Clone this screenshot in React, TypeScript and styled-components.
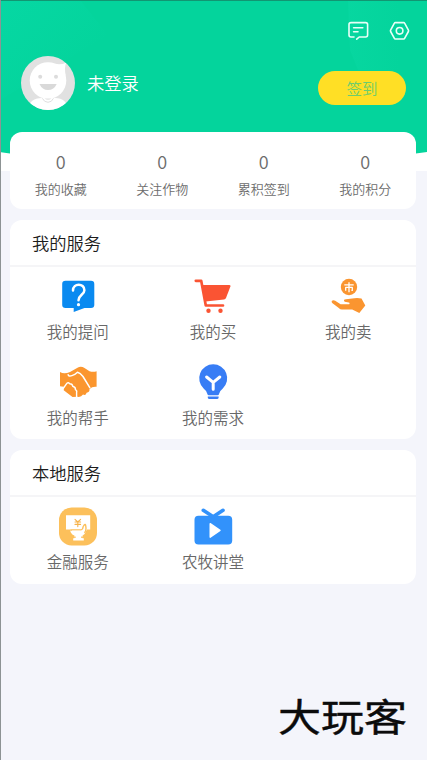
import React from 'react';
import styled, { createGlobalStyle } from 'styled-components';

const Global = createGlobalStyle`
  * { box-sizing: border-box; }
  body { margin: 0; background: #f4f5fb; font-family: "Noto Sans CJK SC", "Noto Sans", sans-serif; font-weight: 350; }
`;

const Screen = styled.main`
  position: relative;
  width: 427px;
  height: 760px;
  overflow: hidden;
  background: #f4f5fb;
  border-left: 1px solid #8d9394;
`;

const Backdrop = styled.svg`
  position: absolute;
  top: 0;
  left: -1px;
  display: block;
`;

const Header = styled.header`
  position: relative;
  height: 132px;
  padding: 20px 21px 0 20px;
`;

const Toolbar = styled.div`
  display: flex;
  justify-content: flex-end;
  gap: 20px;
  height: 22px;
  margin-right: -4px;
`;

const Profile = styled.div`
  display: flex;
  align-items: center;
  height: 55px;
  margin-top: 13px;
`;

const Name = styled.span`
  flex: 1;
  margin-left: 12px;
  color: #fff;
  font-size: 17.3px;
  line-height: 24px;
`;

const CheckIn = styled.button`
  width: 88px;
  height: 34px;
  margin-top: 11px;
  padding: 0;
  border: 0;
  border-radius: 17px;
  background: #ffdf25;
  color: #6ccd6c;
  font: 350 15.5px/34px "Noto Sans CJK SC", sans-serif;
`;

const Card = styled.section<{ $height: number }>`
  position: relative;
  width: 406px;
  height: ${(p) => p.$height}px;
  margin: 0 0 11.5px 9px;
  border-radius: 12px;
  background: #fff;
`;

const Stats = styled.div`
  display: grid;
  grid-template-columns: repeat(4, 1fr);
  padding-top: 18px;
  text-align: center;
  color: #6c6c6c;
`;

const StatValue = styled.div`
  font-size: 18px;
  line-height: 22px;
`;

const StatLabel = styled.div`
  margin-top: 7px;
  font-size: 13px;
  line-height: 20px;
`;

const CardTitle = styled.h2`
  height: 46.5px;
  margin: 0;
  padding-left: 22px;
  border-bottom: 2px solid #f5f5f7;
  color: #1c1c1c;
  font-size: 17.3px;
  font-weight: 350;
  line-height: 46px;
`;

const Services = styled.div`
  display: grid;
  grid-template-columns: repeat(3, 1fr);
  grid-auto-rows: 86px;
  padding-top: 9.5px;
`;

const ServiceItem = styled.div`
  display: flex;
  flex-direction: column;
  align-items: center;
  color: #686868;
  font-size: 15.5px;
  line-height: 24px;

  svg { display: block; margin-bottom: 3px; }
`;

const Brand = styled.div`
  position: absolute;
  left: 277px;
  top: 686px;
  color: #0b0b0b;
  font-size: 43px;
  font-weight: 400;
  line-height: 56px;
  white-space: nowrap;
  transform: scaleY(0.88);
  -webkit-text-stroke: 0.5px #0b0b0b;
  stroke-linejoin: round;
`;

const Icon = ({ children }: { children: React.ReactNode }) => (
  <svg width="40" height="40" viewBox="0 0 40 40" fill="none" strokeLinecap="round" strokeLinejoin="round">
    {children}
  </svg>
);

const QuestionIcon = () => (
  <Icon>
    <path d="M7.5 4.8H33Q36.3 4.8 36.3 8V29Q36.3 32 33 32H26.5L15.7 36V32H7.5Q4.2 32 4.2 29V8Q4.2 4.8 7.5 4.8Z" fill="#0a8af0" />
    <path d="M15 14.5C15 6.8 26.4 6.8 26.4 14.2C26.4 18.7 20.5 19 20.5 24.3" stroke="#fff" strokeWidth="2.5" />
    <circle cx="20.5" cy="28.7" r="1.6" fill="#fff" />
  </Icon>
);

const CartIcon = () => (
  <Icon>
    <path d="M2.8 4.8H8.2L12.8 29.5H30" stroke="#fa5433" strokeWidth="2.7" />
    <path d="M9.5 9H36.4Q38 9 37.4 10.6L33 22Q32.4 23.3 31 23.5L12.5 25.5Z" fill="#fa5433" />
    <circle cx="15.5" cy="34.7" r="2.2" fill="#fa5433" />
    <circle cx="27.5" cy="34.7" r="2.2" fill="#fa5433" />
  </Icon>
);

const SellIcon = () => (
  <Icon>
    <circle cx="21" cy="11" r="8.2" fill="#fa9530" />
    <path d="M21 6.3V8.2M16.3 8.8H25.7M17.7 14.7V11.4H24.3V14.4H23.4M21 9V16.3" stroke="#fff" strokeWidth="1.3" strokeLinecap="butt" />
    <path d="M3.9 24.8Q5.4 23.5 7.2 24.8L12.6 28.2H21.2Q22.4 26.9 20.8 26.5L16.7 25.8Q14.7 23.6 18 23.2L26.4 22.2Q30 21.6 33.5 22.6L37.3 29.6L31.3 37L24.2 33.6H14Q12.2 33.6 10.8 32L4.5 27.2Q3 26 3.9 24.8Z" fill="#fa9530" />
  </Icon>
);

const HandshakeIcon = () => (
  <Icon>
    <path d="M2 10Q6 12.4 12 10L19.5 5.8Q22.8 3.8 26.5 6L31.5 9.3Q35.5 10.4 38.6 9.2V24.8Q34.5 24.2 31.5 27Q32 30 28.6 30.7Q27.8 33.8 25 32.6Q23 35.5 19.5 34.8L14.5 35L5.7 28.3V24.8L2 24.3Z" fill="#fb962e" />
    <path d="M10.2 12.8C10.8 15.5 16.5 13.2 19.5 10.2C21.5 10.7 23.3 12.3 25 14.5L31.8 25.7" stroke="#fff" strokeWidth="1.5" />
    <path d="M4.8 27L9 21.2Q10.3 20 11.8 21.8Q14.4 21.8 14.7 24.2Q17.8 25 17.4 27.7Q19.2 28.5 18.6 30.6V35" stroke="#fff" strokeWidth="1.4" />
  </Icon>
);

const BulbIcon = () => (
  <Icon>
    <path d="M20.2 2.3A14 14 0 0 1 29.8 26.5Q26.4 29.1 26 32.1Q25.8 33.3 24.6 33.3H15.8Q14.6 33.3 14.4 32.1Q14 29.1 10.6 26.5A14 14 0 0 1 20.2 2.3Z" fill="#387df5" />
    <path d="M14.8 34.4H25.6V35.8Q25.6 36.9 24.4 36.9H16Q14.8 36.9 14.8 35.8Z" fill="#387df5" />
    <path d="M13.6 15L20.2 20.3L26.8 15M20.2 20.5V27.3" stroke="#fff" strokeWidth="3" />
  </Icon>
);

const FinanceIcon = () => (
  <Icon>
    <rect x="1" y="1.5" width="38" height="38" rx="12.5" fill="#fcc05b" />
    <path d="M8 9.3H32.2V23.4H29L28 25.3Q27 28.5 24.6 29.5V32.2H25.8V34.6H15.2V32.2H16.4V29.6Q12.5 27.8 12 23.4H8Z" fill="#fff" />
    <path d="M17 13.3L19.8 16L22.6 13.3M19.8 16V20.6M17 16H22.6M17 18.4H22.6" stroke="#f6b34b" strokeWidth="1.1" />
    <path d="M12.7 24H22.8Q24.8 23.8 25.2 20.5Q27 17.6 27.5 18.8Q28.8 23.8 26.8 26.4M16.8 31.2H24.3" stroke="#fcc05b" strokeWidth="1.4" />
    <path d="M13.8 24.6H22.5Q24 25 25.4 22.8Q26 27 23.2 28.6V32H17.6V28.6Q14.5 27.2 13.8 24.6Z" fill="#fff" />
  </Icon>
);

const VideoIcon = () => (
  <Icon>
    <rect x="1.5" y="9.8" width="37.7" height="28.8" rx="4" fill="#3292fb" />
    <path d="M10.3 4.3L20.2 10.8L30 4.3" stroke="#3292fb" strokeWidth="3.6" />
    <path d="M17.2 17.7L27 24.4L17.2 31.2Z" fill="#fff" stroke="#fff" strokeWidth="1.4" />
  </Icon>
);

const Avatar = () => (
  <svg width="54" height="54" viewBox="0 0 54 54">
    <defs><clipPath id="avatar"><circle cx="27" cy="27" r="27" /></clipPath></defs>
    <g clipPath="url(#avatar)">
      <rect width="54" height="54" fill="#e1e1e1" />
      <path d="M7 54Q8 42 21 42H34Q46 42 47 54Z" fill="#fff" />
      <circle cx="27" cy="24.5" r="18.3" fill="#fff" />
      <path d="M34 7.8Q40 9 45.2 6.7Q43 11 44.8 20Z" fill="#fff" />
      <path d="M21.3 42.3Q23.3 46.3 27 46.3T32.5 42.3" fill="none" stroke="#dedede" strokeWidth="1" />
      <path d="M23.5 42.5Q27 45 30.5 42.5Z" fill="#e1e1e1" />
      <circle cx="19.2" cy="20.7" r="2" fill="#dcdcdc" />
      <circle cx="35" cy="20.7" r="2" fill="#dcdcdc" />
      <path d="M18.5 28H35.7Q33 34 27.1 34T18.5 28Z" fill="#d9d9d9" />
    </g>
  </svg>
);

const MessageIcon = () => (
  <svg width="21" height="21" viewBox="0 0 21 21" fill="none" stroke="#e9fff8" strokeWidth="1.6" strokeLinecap="round" strokeLinejoin="round">
    <path d="M6 17H3Q1 17 1 15V4.6Q1 2.6 3 2.6H17.6Q19.6 2.6 19.6 4.6V15Q19.6 17 17.6 17H11.2L8.7 19.2" />
    <path d="M5.6 7.8H14.8M5.6 11.8H10" />
  </svg>
);

const SettingsIcon = () => (
  <svg width="21" height="21" viewBox="0 0 21 21" fill="none" stroke="#e9fff8" strokeWidth="1.6" strokeLinejoin="round">
    <path d="M6.3 2.6H14.7Q15.3 2.6 15.6 3.2L19.4 10.1Q19.7 10.8 19.4 11.5L15.6 18.4Q15.3 19 14.7 19H6.3Q5.7 19 5.4 18.4L1.6 11.5Q1.3 10.8 1.6 10.1L5.4 3.2Q5.7 2.6 6.3 2.6Z" />
    <circle cx="10.6" cy="10.8" r="3.3" />
  </svg>
);

const stats = ['我的收藏', '关注作物', '累积签到', '我的积分'];

const mine = [
  { label: '我的提问', Glyph: QuestionIcon },
  { label: '我的买', Glyph: CartIcon },
  { label: '我的卖', Glyph: SellIcon },
  { label: '我的帮手', Glyph: HandshakeIcon },
  { label: '我的需求', Glyph: BulbIcon },
];

const local = [
  { label: '金融服务', Glyph: FinanceIcon },
  { label: '农牧讲堂', Glyph: VideoIcon },
];

const ServiceCard = ({ title, height, items }: { title: string; height: number; items: typeof mine }) => (
  <Card $height={height}>
    <CardTitle>{title}</CardTitle>
    <Services>
      {items.map(({ label, Glyph }) => (
        <ServiceItem key={label}>
          <Glyph />
          {label}
        </ServiceItem>
      ))}
    </Services>
  </Card>
);

export default function App() {
  return (
    <>
      <Global />
      <Screen>
        <Backdrop width="427" height="171" viewBox="0 0 427 171">
          <defs>
            <linearGradient id="beamLeft" x1="0" x2="0.7" y1="0" y2="0.7">
              <stop offset="0" stopColor="#08dbac" />
              <stop offset="1" stopColor="#04d49c" />
            </linearGradient>
            <linearGradient id="beamRight">
              <stop offset="0" stopColor="#0ad9a4" />
              <stop offset="1" stopColor="#04d49c" />
            </linearGradient>
          </defs>
          <path d="M0 0H427V171H0Z" fill="#fff" />
          <path d="M0 0H427V152Q213 184 0 152Z" fill="#04d49c" />
          <path d="M0 0H80L108 35L0 100Z" fill="url(#beamLeft)" opacity="0.45" />
          <path d="M348 0H400V70H358L350 50Z" fill="url(#beamRight)" opacity="0.5" />
          <path d="M0 0H427V1H0Z" fill="#129672" />
          <path d="M0 0H1V171H0Z" fill="#4f9f8b" />
        </Backdrop>
        <Header>
          <Toolbar>
            <MessageIcon />
            <SettingsIcon />
          </Toolbar>
          <Profile>
            <Avatar />
            <Name>未登录</Name>
            <CheckIn>签到</CheckIn>
          </Profile>
        </Header>
        <Card $height={76.5}>
          <Stats>
            {stats.map((label) => (
              <div key={label}>
                <StatValue>0</StatValue>
                <StatLabel>{label}</StatLabel>
              </div>
            ))}
          </Stats>
        </Card>
        <ServiceCard title="我的服务" height={218.5} items={mine} />
        <ServiceCard title="本地服务" height={134} items={local} />
        <Brand>大玩客</Brand>
      </Screen>
    </>
  );
}
